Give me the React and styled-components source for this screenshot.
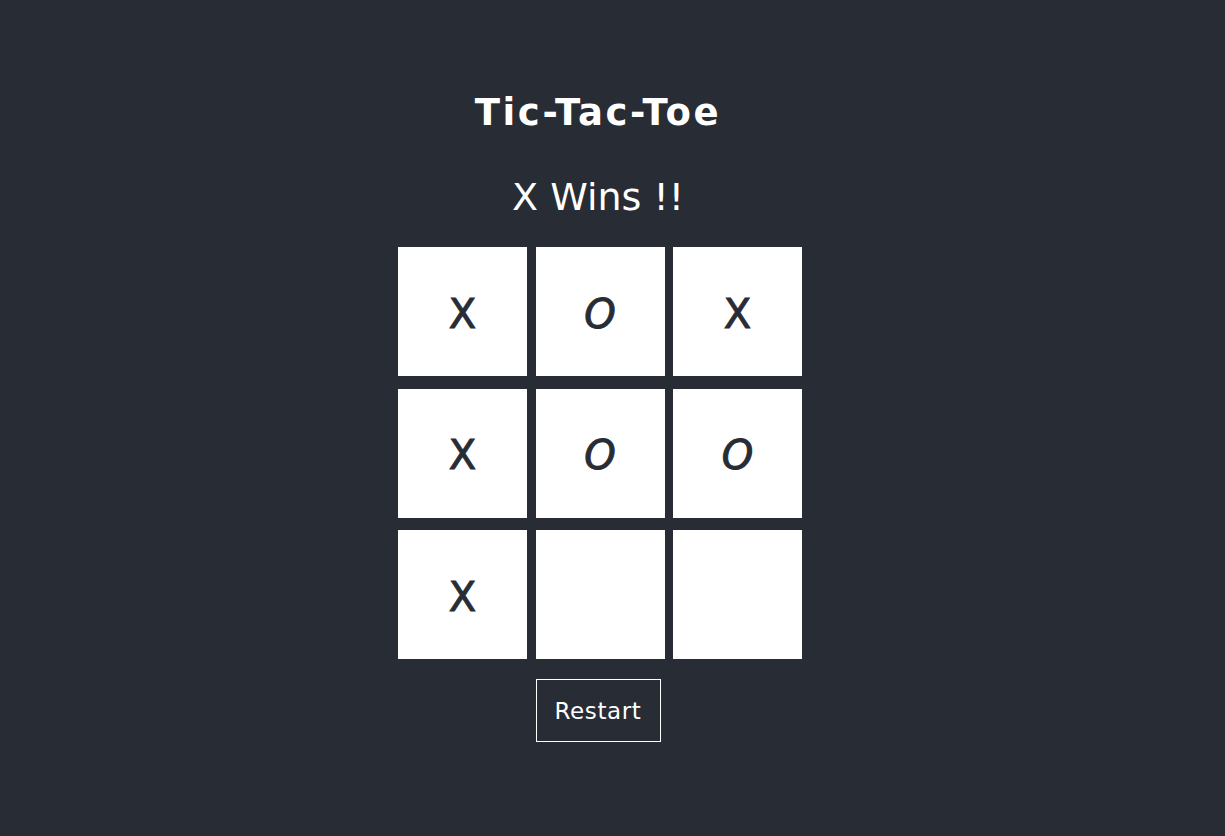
import React from "react";
import styled, { createGlobalStyle } from "styled-components";

const Global = createGlobalStyle`
  html, body { margin: 0; padding: 0; background: #282c34; }
  body { min-height: 836px; font-family: "DejaVu Sans", "Open Sans", sans-serif; }
`;

const Page = styled.main`
  width: 1200px;
  display: flex;
  flex-direction: column;
  align-items: center;
  color: #ffffff;
  padding-top: 88px;
`;

const Title = styled.h1`
  margin: 0 4px 0 0;
  font-family: "DejaVu Sans", sans-serif;
  font-weight: bold;
  font-size: 37px;
  line-height: 50px;
  letter-spacing: 2.6px;
`;

const Status = styled.h2`
  margin: 34px 4px 0 0;
  font-family: "DejaVu Sans", sans-serif;
  font-weight: normal;
  font-size: 38px;
  line-height: 50px;
`;

const Board = styled.div`
  margin-top: 25px;
  display: grid;
  grid-template-columns: repeat(3, 129px);
  grid-auto-rows: 129px;
  column-gap: 8.5px;
  row-gap: 12.5px;
`;

const Cell = styled.div`
  background: #ffffff;
  color: #282c34;
  display: flex;
  align-items: center;
  justify-content: center;
  font-family: "DejaVu Sans", sans-serif;
  font-style: ${(p) => (p.$slanted ? "italic" : "normal")};
  font-size: 40px;
  -webkit-text-stroke: 1px #282c34;
  padding-top: 4px;
  box-sizing: border-box;
`;

const RestartButton = styled.button`
  margin: 20px 4px 0 0;
  width: 125px;
  height: 63px;
  background: transparent;
  border: 1px solid #ffffff;
  color: #ffffff;
  font-family: "DejaVu Sans", sans-serif;
  font-size: 23px;
  letter-spacing: 0.6px;
  padding: 0;
  cursor: pointer;
`;

const cells = ["X", "O", "X", "X", "O", "O", "X", "", ""];

export default function App() {
  return (
    <>
      <Global />
      <Page>
        <Title>Tic-Tac-Toe</Title>
        <Status>X Wins !!</Status>
        <Board>
          {cells.map((v, i) => (
            <Cell key={i} $slanted={v === "O"}>
              {v}
            </Cell>
          ))}
        </Board>
        <RestartButton>Restart</RestartButton>
      </Page>
    </>
  );
}
